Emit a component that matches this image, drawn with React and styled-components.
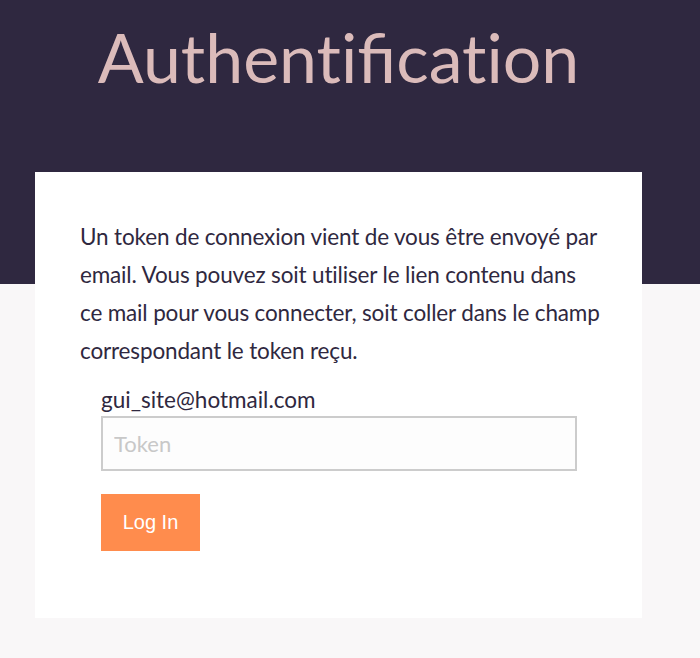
import React from 'react'
import styled, { createGlobalStyle } from 'styled-components'

const GlobalStyle = createGlobalStyle`
  html, body {
    margin: 0;
    padding: 0;
  }
  body {
    font-family: Lato, "Open Sans", sans-serif;
    background: linear-gradient(#2f2840 0, #2f2840 284px, #f9f7f8 284px);
    min-height: 658px;
  }
`

const Page = styled.div`
  width: 607px;
  margin-left: 35px;
`

const Title = styled.h1`
  margin: 0;
  padding-top: 17px;
  height: 172px;
  box-sizing: border-box;
  text-align: center;
  font-family: Lato, sans-serif;
  font-weight: 400;
  font-size: 68px;
  line-height: 80px;
  color: #dbbbba;
`

const Card = styled.div`
  background: #ffffff;
  padding: 46px 40px 67px 45px;
`

const Intro = styled.p`
  margin: 0 0 14px 0;
  font-size: 22.5px;
  letter-spacing: -0.15px;
  line-height: 38px;
  color: #2f2840;
  font-variant-ligatures: no-common-ligatures;
`

const Form = styled.form`
  display: flex;
  flex-direction: column;
  align-items: flex-start;
  padding-left: 21px;
`

const Email = styled.label`
  font-size: 22.5px;
  line-height: 32px;
  color: #2f2840;
`

const TokenInput = styled.input`
  width: 476px;
  height: 55px;
  box-sizing: border-box;
  border: 2px solid #cccccc;
  background: #fdfdfd;
  padding: 0 11px;
  font-family: Lato, sans-serif;
  font-size: 22px;
  color: #2f2840;
  outline: none;
  &::placeholder {
    color: #c8c8c8;
  }
`

const Button = styled.button`
  margin-top: 23px;
  width: 99px;
  height: 57px;
  border: none;
  background: #ff8c4d;
  color: #ffffff;
  font-family: "Liberation Sans", Arial, sans-serif;
  font-size: 20px;
  cursor: pointer;
`

export default function App() {
  return (
    <>
      <GlobalStyle />
      <Page>
        <Title>{'Authent\u200Cificat\u200Cion'}</Title>
        <Card>
          <Intro>
            Un token de connexion vient de vous être envoyé par email. Vous pouvez soit utiliser le lien contenu dans ce mail pour vous connecter, soit coller dans le champ correspondant le token reçu.
          </Intro>
          <Form onSubmit={(e) => e.preventDefault()}>
            <Email>gui_site@hotmail.com</Email>
            <TokenInput placeholder="Token" />
            <Button type="submit">Log In</Button>
          </Form>
        </Card>
      </Page>
    </>
  )
}
